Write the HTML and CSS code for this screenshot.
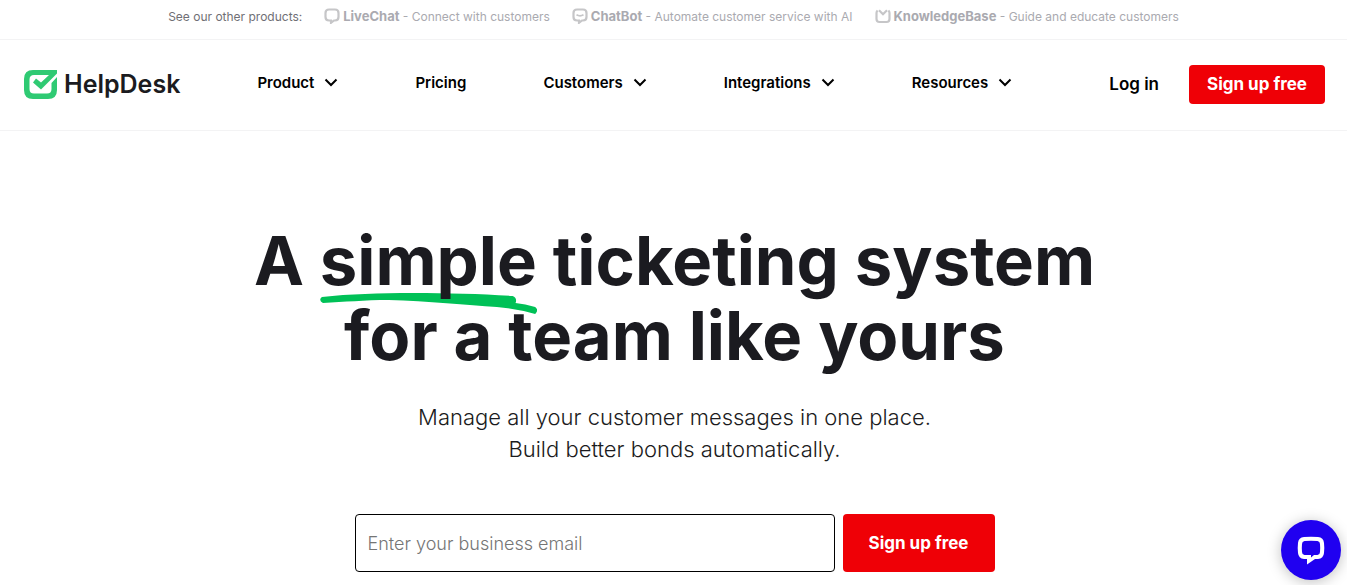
FILE: index.html
```
<!DOCTYPE html>
<html lang="en">
	<head>
		<meta charset="utf-8">
		<meta name="viewport" content="width=device-width, initial-scale=1">
		<title>HelpDesk</title>
		<link rel="stylesheet" href="styles.css">
	</head>
	<body>
		<div class="products">
			<span class="products-label">See our other products:</span>
			<a class="product" href="#">
				<svg width="16" height="16" viewBox="0 0 16 16" fill="none" stroke="currentColor" stroke-width="2.2"><path d="M5 1.500h6q3.500 0 3.500 3.500v4q0 3.500-3.500 3.500H10L7 14.800v-2.300H5Q1.500 12.500 1.500 9V5Q1.500 1.500 5 1.500Z"/></svg>
				<span><strong>LiveChat</strong> - Connect with customers</span>
			</a>
			<a class="product" href="#">
				<svg width="16" height="16" viewBox="0 0 16 16" fill="none" stroke="currentColor" stroke-width="2.2"><path d="M5 1.500h6q3.500 0 3.500 3.500v4q0 3.500-3.500 3.500H10L7 14.800v-2.300H5Q1.500 12.500 1.500 9V5Q1.500 1.500 5 1.500Z"/><path d="M4.500 6.800q3.500 2 7 0" stroke-width="1.800"/></svg>
				<span><strong>ChatBot</strong> - Automate customer service with AI</span>
			</a>
			<a class="product" href="#">
				<svg width="16" height="16" viewBox="0 0 16 16" fill="none" stroke="currentColor" stroke-width="2.2"><path d="M2.600 2.500Q1.500 3.500 1.500 5v6q0 3 3 3h7q3 0 3-3V5q0-1.500-1.100-2.500M4 2.300l4 4 4-4"/></svg>
				<span><strong>KnowledgeBase</strong> - Guide and educate customers</span>
			</a>
		</div>

		<header class="header">
			<a class="logo" href="#">
				<svg width="33" height="29" viewBox="0 0 33 29" aria-hidden="true">
					<path fill="#2fca73" d="M9 0h24v3.500L17 19.500l-8-7 3-4 5 4 8-7.500H10q-4.500 0-4.500 4.500V19q0 4.500 4.500 4.500h13q4.500 0 4.500-4.500v-6l5.500-6V20q0 9-9 9H9q-9 0-9-9V9q0-9 9-9Z"/>
				</svg>
				<span>HelpDesk</span>
			</a>
			<nav class="nav">
				<button type="button">Product <svg width="14" height="9" viewBox="0 0 14 9"><path d="M1.500 1.500L7 7l5.500-5.500"/></svg></button>
				<a href="#">Pricing</a>
				<button type="button">Customers <svg width="14" height="9" viewBox="0 0 14 9"><path d="M1.500 1.500L7 7l5.500-5.500"/></svg></button>
				<button type="button">Integrations <svg width="14" height="9" viewBox="0 0 14 9"><path d="M1.500 1.500L7 7l5.500-5.500"/></svg></button>
				<button type="button">Resources <svg width="14" height="9" viewBox="0 0 14 9"><path d="M1.500 1.500L7 7l5.500-5.500"/></svg></button>
			</nav>
			<a class="login" href="#">Log in</a>
			<a class="btn btn-small" href="#">Sign up free</a>
		</header>

		<main class="hero">
			<h1>
				A <span class="underlined">simple<svg class="stroke" viewBox="0 0 221 22" preserveAspectRatio="none" aria-hidden="true"><path fill="#00c157" d="M2 4C30 1 60 0 95 0c35 0 70 1 101 3q5 2 3 7 10 1 20 4 4 3 0 7-18-5-39-7C150 12 110 8 70 7 45 7 25 9 3 10q-5-3-1-6Z"/></svg></span> ticketing system<br>
				for a team like yours
			</h1>
			<p class="lead">Manage all your customer messages in one place.<br>Build better bonds automatically.</p>
			<form class="signup">
				<input type="email" name="email" placeholder="Enter your business email" aria-label="Business email">
				<button class="btn" type="submit">Sign up free</button>
			</form>
		</main>

		<button class="chat" type="button" aria-label="Open chat">
			<svg width="30" height="30" viewBox="0 0 30 30"><path fill="#fff" fill-rule="evenodd" d="M8 2Q15 1.500 22 2q5.500.5 6 6 .6 5 0 10-.5 5.500-6 6h-3l-8 5.500V24H8q-5.500-.5-6-6-.6-5 0-10 .5-5.500 6-6ZM8.500 6Q6 6.300 6 9q-.4 4 0 8 0 2.700 2.500 3H15v2.500l3-2.500h3.500q2.500-.3 2.500-3 .4-4 0-8 0-2.700-2.500-3-6.500-.4-13 0Z"/></svg>
		</button>
	</body>
</html>
```
FILE: styles.css
```
* {
	box-sizing: border-box;
}
body {
	margin: 0;
	background: #fff;
	color: #1b1b20;
	font-family: Inter, "Liberation Sans", sans-serif;
}
a {
	color: inherit;
	text-decoration: none;
}
button, input {
	font: inherit;
}
button {
	cursor: pointer;
}

.products {
	display: flex;
	justify-content: center;
	align-items: center;
	gap: 22px;
	height: 40px;
	padding-bottom: 7px;
	border-bottom: 1px solid #f3f3f4;
	font-size: 12px;
	white-space: nowrap;
}
.products-label {
	color: #6f6f75;
}
.product {
	display: flex;
	align-items: center;
	gap: 3px;
	color: #aaaab0;
}
.product svg {
	color: #c6c6c8;
}
.product strong {
	font-size: 13px;
}

.header {
	display: flex;
	align-items: center;
	height: 91px;
	padding: 0 22px 2px 24px;
	border-bottom: 1px solid #f3f3f4;
	white-space: nowrap;
}
.logo {
	display: flex;
	align-items: center;
	gap: 7px;
	font-size: 25px;
	font-weight: 600;
}
.nav {
	flex: 1;
	display: flex;
	justify-content: space-between;
	margin: 0 97px 0 77px;
	padding-bottom: 3px;
	font-size: 15px;
	font-weight: 600;
	color: #000;
}
.nav button {
	display: flex;
	align-items: center;
	gap: 10px;
	padding: 0;
	border: 0;
	background: none;
	color: inherit;
}
.nav path {
	fill: none;
	stroke: #000;
	stroke-width: 2;
}
.login {
	margin-right: 30px;
	font-size: 17px;
	font-weight: 600;
	color: #000;
}

.btn {
	display: flex;
	justify-content: center;
	align-items: center;
	width: 152px;
	border: 0;
	border-radius: 4px;
	background: #ef0006;
	color: #fff;
	font-size: 17px;
	font-weight: 700;
}
.btn-small {
	width: 136px;
	height: 39px;
}

.hero {
	display: flex;
	flex-direction: column;
	align-items: center;
	padding: 92px 22px 13px 24px;
	text-align: center;
}
h1 {
	margin: 0;
	font-size: 67px;
	font-weight: 700;
	line-height: 75px;
}
.underlined {
	position: relative;
	z-index: 0;
}
.stroke {
	position: absolute;
	z-index: -1;
	left: 0;
	bottom: -14px;
	width: 100%;
	height: 22px;
}
.lead {
	margin: 28px 0 0;
	font-size: 22px;
	font-weight: 300;
	line-height: 32px;
}
.signup {
	display: flex;
	gap: 8px;
	width: 100%;
	max-width: 640px;
	height: 58px;
	margin-top: 49px;
}
.signup input {
	flex: 1;
	min-width: 0;
	padding: 0 12px;
	border: 1px solid #000;
	border-radius: 4px;
	font-size: 18px;
	font-weight: 300;
}
.signup input::placeholder {
	color: #757575;
}

.chat {
	position: fixed;
	right: 6px;
	bottom: 5px;
	display: flex;
	justify-content: center;
	align-items: center;
	width: 60px;
	height: 60px;
	padding: 0;
	border: 0;
	border-radius: 50%;
	background: #2000f0;
	box-shadow: 0 2px 14px rgba(0, 0, 0, .25);
}
```
